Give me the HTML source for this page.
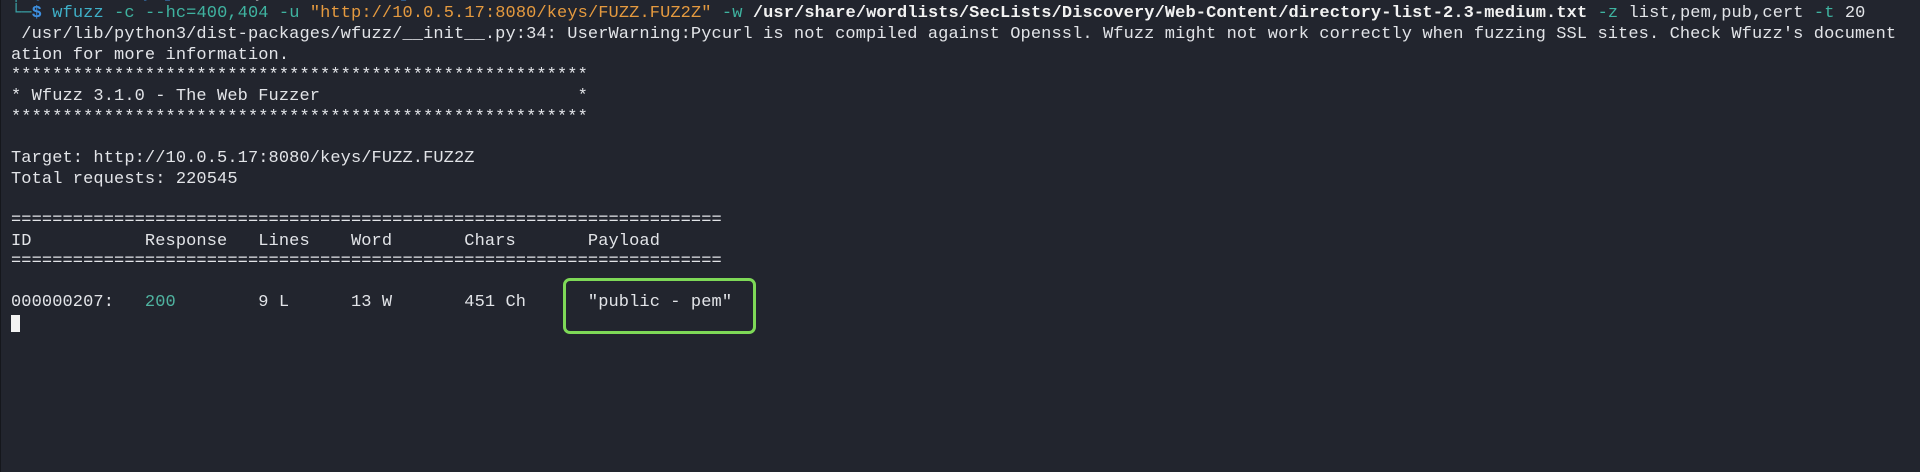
<!DOCTYPE html>
<html><head><meta charset="utf-8"><style>
html,body{margin:0;padding:0;}
body{width:1920px;height:472px;background:#22252e;overflow:hidden;position:relative;border-left:1px solid #15171c;box-sizing:border-box;}
.t{position:absolute;left:10px;top:-16.2px;font-family:"Liberation Mono","DejaVu Sans Mono",monospace;font-size:17px;letter-spacing:0.1px;line-height:20.64px;color:#e2e4e8;white-space:pre;}
.b{color:#3d8fe0;font-weight:bold}
.tl{color:#3aa3a8}
.cm{color:#3fb0c8}
.ar{color:#3fb3a0}
.s{color:#e59a3f}
.w{color:#f2f2f2;font-weight:bold}
.g{color:#4fb3a0}
.box{position:absolute;left:562px;top:278px;width:193px;height:56px;border:3px solid #7ed957;border-radius:7px;box-sizing:border-box;}
.cur{position:absolute;left:10px;top:315px;width:9px;height:17px;background:#f2f2f2;}
</style></head><body>
<div class="t"><span class="tl">│ </span><span class="b">(kali㉿kali)-[</span><span class="w">~/Desktop/Teacher/scan</span><span class="b">]</span>
<span class="tl">└─</span><span class="b">$</span> <span class="cm">wfuzz</span> <span class="ar">-c --hc=400,404 -u</span> <span class="s">"http://10.0.5.17:8080/keys/FUZZ.FUZ2Z"</span> <span class="ar">-w</span> <span class="w">/usr/share/wordlists/SecLists/Discovery/Web-Content/directory-list-2.3-medium.txt</span> <span class="ar">-z</span> list,pem,pub,cert <span class="ar">-t</span> 20
 /usr/lib/python3/dist-packages/wfuzz/__init__.py:34: UserWarning:Pycurl is not compiled against Openssl. Wfuzz might not work correctly when fuzzing SSL sites. Check Wfuzz's document
ation for more information.
********************************************************
* Wfuzz 3.1.0 - The Web Fuzzer                         *
********************************************************

Target: http://10.0.5.17:8080/keys/FUZZ.FUZ2Z
Total requests: 220545

=====================================================================
ID           Response   Lines    Word       Chars       Payload
=====================================================================

000000207:   <span class="g">200</span>        9 L      13 W       451 Ch      "public - pem"
</div>
<div class="box"></div>
<div class="cur"></div>
</body></html>
